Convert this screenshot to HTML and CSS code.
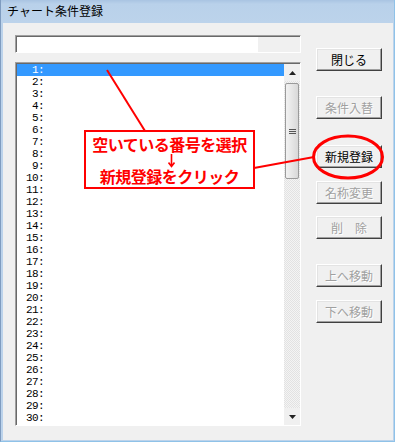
FILE: index.html
```html
<!DOCTYPE html>
<html lang="ja">
<head>
    <meta charset="UTF-8">
    <title>チャート条件登録</title>
    <link rel="stylesheet" href="styles.css">
</head>
<body>

<div class="window">
    <div class="titlebar">チャート条件登録</div>
    <div class="client">
        <div class="left-col">
            <div class="textbox">
                <div class="tb-white"></div>
                <div class="tb-gray"></div>
            </div>
            <div class="listbox">
                <div class="rows">
                    <div class="row sel"><span class="no">1</span>:</div>
                    <div class="row"><span class="no">2</span>:</div>
                    <div class="row"><span class="no">3</span>:</div>
                    <div class="row"><span class="no">4</span>:</div>
                    <div class="row"><span class="no">5</span>:</div>
                    <div class="row"><span class="no">6</span>:</div>
                    <div class="row"><span class="no">7</span>:</div>
                    <div class="row"><span class="no">8</span>:</div>
                    <div class="row"><span class="no">9</span>:</div>
                    <div class="row"><span class="no">10</span>:</div>
                    <div class="row"><span class="no">11</span>:</div>
                    <div class="row"><span class="no">12</span>:</div>
                    <div class="row"><span class="no">13</span>:</div>
                    <div class="row"><span class="no">14</span>:</div>
                    <div class="row"><span class="no">15</span>:</div>
                    <div class="row"><span class="no">16</span>:</div>
                    <div class="row"><span class="no">17</span>:</div>
                    <div class="row"><span class="no">18</span>:</div>
                    <div class="row"><span class="no">19</span>:</div>
                    <div class="row"><span class="no">20</span>:</div>
                    <div class="row"><span class="no">21</span>:</div>
                    <div class="row"><span class="no">22</span>:</div>
                    <div class="row"><span class="no">23</span>:</div>
                    <div class="row"><span class="no">24</span>:</div>
                    <div class="row"><span class="no">25</span>:</div>
                    <div class="row"><span class="no">26</span>:</div>
                    <div class="row"><span class="no">27</span>:</div>
                    <div class="row"><span class="no">28</span>:</div>
                    <div class="row"><span class="no">29</span>:</div>
                    <div class="row"><span class="no">30</span>:</div>
                </div>
                <div class="scrollbar">
                    <div class="sb-btn">
                        <svg width="7" height="4" viewBox="0 0 7 4"><path d="M3.5 0 L7 4 L0 4 Z" fill="#222"/></svg>
                    </div>
                    <div class="sb-thumb">
                        <div class="grip"></div>
                    </div>
                    <div class="sb-track"></div>
                    <div class="sb-btn">
                        <svg width="7" height="4" viewBox="0 0 7 4"><path d="M0 0 L7 0 L3.5 4 Z" fill="#222"/></svg>
                    </div>
                </div>
            </div>
        </div>
        <div class="right-col">
            <button class="btn b-close">閉じる</button>
            <button class="btn b-swap" disabled>条件入替</button>
            <button class="btn b-new">新規登録</button>
            <button class="btn b-rename" disabled>名称変更</button>
            <button class="btn b-del" disabled>削　除</button>
            <button class="btn b-up" disabled>上へ移動</button>
            <button class="btn b-down" disabled>下へ移動</button>
        </div>
    </div>

    <!-- 注釈 -->
    <svg class="marks" width="395" height="442" viewBox="0 0 395 442">
        <line x1="107" y1="70" x2="145" y2="131" stroke="#f00" stroke-width="2"/>
        <line x1="254" y1="168" x2="314" y2="157" stroke="#f00" stroke-width="2"/>
        <ellipse cx="348" cy="157" rx="34.5" ry="21" fill="none" stroke="#f00" stroke-width="3"/>
    </svg>
    <div class="note">
        <div class="note-line">空いている番号を選択</div>
        <div class="note-arrow">
            <svg width="7" height="14" viewBox="0 0 7 14"><path d="M3.5 0 V12 M0.5 8.5 L3.5 12.5 L6.5 8.5" fill="none" stroke="#f00" stroke-width="1.6"/></svg>
        </div>
        <div class="note-line">新規登録をクリック</div>
    </div>
</div>

</body>
</html>
```

FILE: styles.css
```css
body {
    margin: 0;
    font-family: "Noto Sans CJK JP", sans-serif;
    font-size: 12px;
}
.window {
    position: relative;
    width: 395px;
    height: 442px;
    box-sizing: border-box;
    display: flex;
    flex-direction: column;
    background-color: #bcd3eb;
    border-left: 1px solid #7f9cc0;
    border-right: 1px solid #8fc2e8;
    border-bottom: 1px solid #8fc2e8;
}
.titlebar {
    height: 23px;
    line-height: 22px;
    padding-left: 6px;
    color: #000;
    background: linear-gradient(#a9c4e2, #b9d1ea 4px, #bcd3eb);
}
.client {
    flex: 1;
    display: flex;
    margin: 0 1px 1px 2px;
    padding: 12px 0 0 12px;
    background-color: #f0f0f0;
}
.left-col {
    width: 286px;
}
.textbox {
    display: flex;
    height: 18px;
    box-sizing: border-box;
    border-top: 1px solid #a0a0a0;
    border-left: 1px solid #a0a0a0;
    border-right: 1px solid #fff;
    border-bottom: 1px solid #fff;
    box-shadow: inset 1px 1px #696969;
    margin-bottom: 9px;
}
.tb-white {
    flex: 1;
    margin: 1px 0 0 1px;
    background-color: #fff;
}
.tb-gray {
    width: 42px;
    background-color: #f0f0f0;
    margin-top: 1px;
}
.listbox {
    display: flex;
    height: 364px;
    box-sizing: border-box;
    border-top: 1px solid #a0a0a0;
    border-left: 1px solid #a0a0a0;
    border-right: 1px solid #fff;
    border-bottom: 1px solid #fff;
    padding: 1px 0 0 1px;
    box-shadow: inset 1px 1px #696969, inset -1px -1px #e3e3e3;
}
.rows {
    flex: 1;
    background-color: #fff;
}
.row {
    height: 12px;
    line-height: 12px;
    padding-left: 9px;
    font-family: "Liberation Mono", monospace;
    font-size: 11px;
    letter-spacing: -0.6px;
    color: #000;
}
.row.sel {
    background-color: #3399ff;
    color: #fff;
}
.no {
    display: inline-block;
    width: 12px;
    text-align: right;
}
.scrollbar {
    width: 16px;
    display: flex;
    flex-direction: column;
    background: repeating-conic-gradient(#f4f4f4 0 25%, #e2e2e2 0 50%) 0 0 / 2px 2px;
}
.sb-btn {
    height: 17px;
    display: flex;
    align-items: center;
    justify-content: center;
    background-color: #f0f0f0;
}
.sb-thumb {
    height: 94px;
    margin: 2px 1px 0 1px;
    border: 1px solid #9a9a9a;
    border-radius: 2px;
    background: linear-gradient(90deg, #f2f2f2, #e6e6e6 50%, #d8d8d8);
    display: flex;
    align-items: center;
    justify-content: center;
}
.grip {
    width: 7px;
    height: 5px;
    background: repeating-linear-gradient(#555 0 1px, transparent 1px 2px);
}
.sb-track {
    flex: 1;
}
.right-col {
    display: flex;
    flex-direction: column;
    align-items: flex-start;
    margin-left: 15px;
}
.btn {
    width: 66px;
    height: 23px;
    padding: 0;
    font-family: "Noto Sans CJK JP", sans-serif;
    font-size: 12px;
    color: #000;
    background-color: #f0f0f0;
    border-top: 1px solid #fff;
    border-left: 1px solid #fff;
    border-right: 1px solid #404040;
    border-bottom: 1px solid #404040;
    box-shadow: inset -1px -1px #a0a0a0, inset 1px 1px #e3e3e3;
}
.btn:disabled {
    color: #a0a0a0;
    text-shadow: 1px 1px #fff;
}
.b-close { margin-top: 13px; }
.b-swap { margin-top: 25px; }
.b-new { margin-top: 26px; }
.b-rename { margin-top: 13px; }
.b-del { margin-top: 12px; }
.b-up { margin-top: 25px; }
.b-down { margin-top: 13px; }

.marks {
    position: absolute;
    left: -1px;
    top: 0;
    pointer-events: none;
}
.note {
    position: absolute;
    left: 83px;
    top: 130px;
    width: 171px;
    height: 59px;
    box-sizing: border-box;
    border: 2px solid #f00;
    background-color: #fff;
    padding-top: 4px;
    text-align: center;
    color: #f00;
    font-weight: bold;
}
.note-line {
    font-size: 16px;
    line-height: 17px;
    letter-spacing: -0.5px;
}
.note-arrow {
    height: 15px;
    display: flex;
    justify-content: center;
    align-items: center;
    padding-left: 3px;
}
```
